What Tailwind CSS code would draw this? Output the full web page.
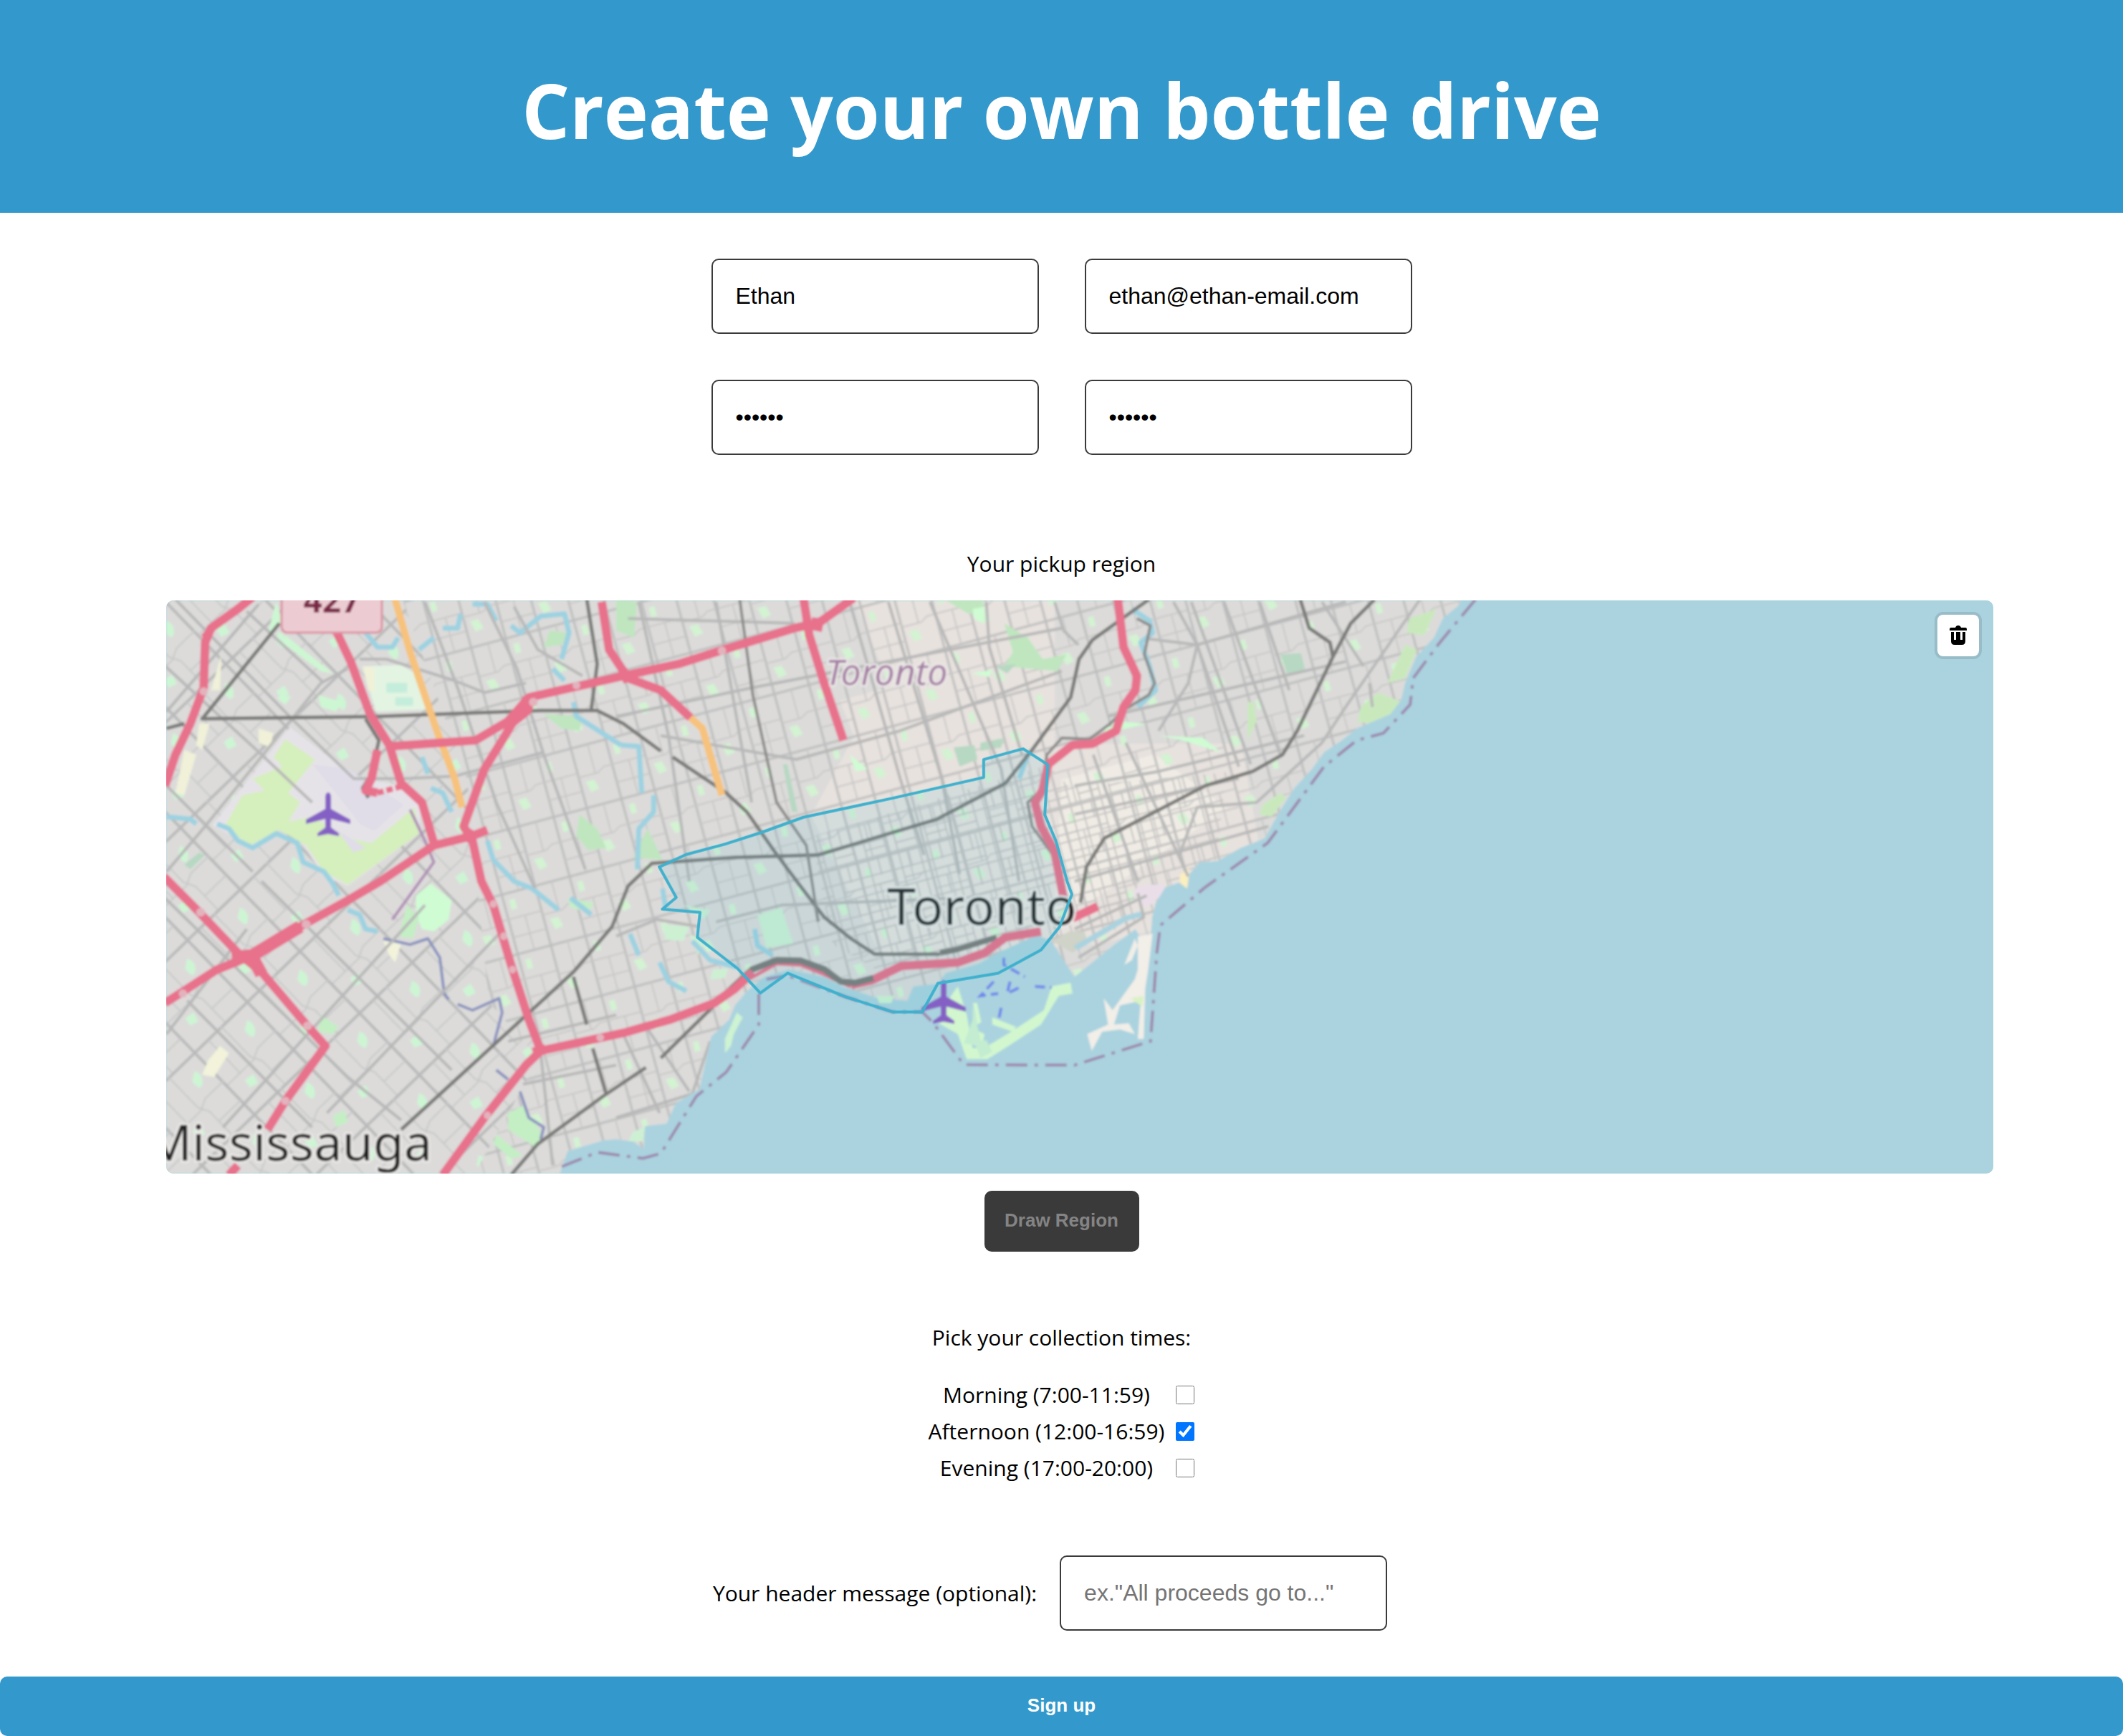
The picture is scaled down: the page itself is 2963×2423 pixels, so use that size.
<!DOCTYPE html>
<html lang="en">
<head>
<meta charset="utf-8">
<title>Create your own bottle drive</title>
<meta name="viewport" content="width=device-width, initial-scale=1">
<script src="https://cdn.jsdelivr.net/npm/@tailwindcss/browser@4"></script>
</head>
<body class="bg-white text-black font-['Open_Sans','Noto_Sans',sans-serif] text-[30px] leading-[44px]">
<header class="bg-[#3399cc] pt-[84px] pb-[73px] px-8 text-center">
  <h1 class="text-white font-bold text-[105px] leading-[140px]">Create your own bottle drive</h1>
</header>

<form class="flex flex-col items-center">
  <div class="mt-16 grid grid-cols-[repeat(2,457px)] gap-16">
    <input type="text" aria-label="Name" value="Ethan" class="h-[105px] rounded-[10px] border-2 border-[#3a3a3a] bg-white px-8 font-['Liberation_Sans',Arial,sans-serif] text-[32px]">
    <input type="email" aria-label="Email" value="ethan@ethan-email.com" class="h-[105px] rounded-[10px] border-2 border-[#3a3a3a] bg-white px-8 font-['Liberation_Sans',Arial,sans-serif] text-[32px]">
    <input type="password" aria-label="Password" value="secret" class="h-[105px] rounded-[10px] border-2 border-[#3a3a3a] bg-white px-8 font-['Liberation_Sans',Arial,sans-serif] text-[32px]">
    <input type="password" aria-label="Confirm password" value="secret" class="h-[105px] rounded-[10px] border-2 border-[#3a3a3a] bg-white px-8 font-['Liberation_Sans',Arial,sans-serif] text-[32px]">
  </div>

  <p class="mt-[130px]">Your pickup region</p>

  <div class="mt-[29px] w-full pl-[232px] pr-[181px]">
    <div class="relative h-[800px] overflow-hidden rounded-[10px] bg-[#aad3df]">
      <svg class="block h-full w-full" viewBox="0 0 2550 800" preserveAspectRatio="xMinYMin slice" role="img" aria-label="Map of Toronto">
        <defs>
          <filter id="soft" x="0" y="0" width="100%" height="100%"><feGaussianBlur stdDeviation="1.4"/></filter>
          <clipPath id="land"><path transform="translate(-12 -18) scale(.41454 .33333)" d="M0,0H4410L4380,75 4327,130 4297,210 4237,290 4200,400 4187,470 4150,530 4037,590 3987,640 3927,690 3887,760 3827,840 3777,940 3727,1050 3647,1090 3567,1145 3507,1150 3473,1200 3466,1260 3440,1235 3393,1254 3360,1320 3348,1380 3344,1465 3312,1470 3292,1430 3216,1500 3167,1550 3087,1630 3050,1560 3010,1480 2960,1455 2844,1520 2764,1575 2654,1615 2624,1660 2544,1670 2524,1730 2424,1720 2304,1670 2244,1630 2124,1600 2044,1630 1984,1690 1944,1750 1924,1810 1864,1880 1844,1990 1824,2100 1744,2160 1714,2245 1640,2255 1637,2350 1600,2320 1544,2310 1500,2315 1380,2360 1350,2470H0Z"/></clipPath>
          <pattern id="west" width="120" height="102" patternUnits="userSpaceOnUse" patternTransform="rotate(46)">
            <path d="M0,2H120M2,0V102" stroke="#bababa" stroke-width="4" fill="none"/>
            <path d="M0,52H60L75,44H120M58,0V36L66,52V102M2,78H66M94,2V44" stroke="#c8c8c8" stroke-width="2" fill="none"/>
            <path d="M20,20q12,-6 20,4t-12,8zM80,66l14,4-4,12-12-2z" fill="#cdf5d3"/>
          </pattern>
          <pattern id="east" width="98" height="86" patternUnits="userSpaceOnUse" patternTransform="rotate(-15)">
            <path d="M0,2H98M2,0V86M52,0V86" stroke="#bdbdbd" stroke-width="3" fill="none"/>
            <path d="M0,44H30L40,38H98M26,2V44M76,38V86M52,64H98" stroke="#c9c8c7" stroke-width="2" fill="none"/>
            <path d="M10,52h12l4,14-12,2zM60,12h8v14h-8z" fill="#d3f3d2"/>
          </pattern>
          <pattern id="core" width="44" height="50" patternUnits="userSpaceOnUse" patternTransform="rotate(-15)">
            <path d="M0,1H44M1,0V50M16,0V50M30,0V28M0,26H44M16,40H44" stroke="#c4c2c1" stroke-width="2" fill="none"/>
          </pattern>
          <g id="plane"><path d="M0,-31C3,-31 4,-27 4,-24V-8L31,7V13L4,6V18L15,26V30L0,27L-15,30V26L-4,18V6L-31,13V7L-4,-8V-24C-4,-27 -3,-31 0,-31Z" fill="#8461c4"/></g>
        </defs>

        <g filter="url(#soft)">
          <rect width="2550" height="800" fill="#aad3df"/>
          <g clip-path="url(#land)">
            <rect width="1900" height="800" fill="#dcdbda"/>
            <path d="M960,0H1240V200L1500,200 1540,420 1300,480 1000,500 900,300 960,190 940,140 1010,120Z" fill="#e7e2de"/>
            <path d="M1250,250L1380,215 1480,290 1290,420 1240,440Z" fill="#f0ece5"/>
            <path d="M0,0H330L420,250 450,560 520,640 430,800H0Z" fill="url(#west)"/>
            <path d="M330,0H1900V800H430L520,640 450,560 420,250Z" fill="url(#east)"/>
            <path d="M900,330L1230,230 1260,260 1480,240 1460,400 1300,470 1000,520 930,480Z" fill="url(#core)"/>

            <!-- fields and parks -->
            <g transform="translate(-12 -18) scale(.41454 .33333)">
              <path d="M445,585L670,800 830,830 885,900 880,1030 640,1250 560,1210 480,1060 400,1010 330,1095 185,995Z" fill="#e6e3e8"/>
              <path d="M430,635L390,710 420,750 320,800 360,850 285,870 225,1000 310,1080 410,1015 500,1080 560,1190 640,1245 880,1030 865,920 720,1070 640,1050 520,960 440,980 480,900 440,860 530,720Z" fill="#d5efbd"/>
              <path d="M520,740L640,760 830,910 730,1020 680,990 600,860Z" fill="#e0dde8"/>
              <path d="M600,1010L700,1090 660,1110z" fill="#e0dde8"/>
              <path d="M690,330L820,325 880,370 920,510 735,520Z" fill="#e3f4e2"/>
              <path d="M770,400h70v40h-70zM800,460h60v35h-60z" fill="#c5eddb"/>
              <path d="M690,330L730,335 730,440 710,430zM215,280L180,430 210,430zM140,570h35l-25,110-20-20zM90,680l40,20-40,170-30-10zM340,590l50,20-10,60-40-20z" fill="#f0f1d8"/>
              <path d="M400,60l20,80-50,60 20-100zM540,450l80,30-20,40-50-20zM430,200l100,100 60,60-40-10-120-110zM400,460l50-5-20,35z" fill="#cdf7d2"/>
              <path d="M1300,530l130,10-10,60-60-10zM1320,180l60,10-20,50-60,10zM1420,950l60,60 30,80-60,10-40-60zM1544,50l70,10-10,150-60-30zM1650,1010l50,130-100-10zM2650,50h130v60h-50zM2850,150l80,60 50,90 80,-20-30,70-180-20 30-60z" fill="#bfe6bf"/>
              <path d="M2820,330l70-10-30,40zM2680,670l70,-10 10,60-60,30zM2770,650l80-20-10,40-70,15zM2105,740l15,0 35,200-20,0zM90,1160l50-50 20,10-50,60zM3780,280l70-5 15,80-60,15z" fill="#b7d8c2"/>
              <path d="M870,1290l50-50 70,70-10,80-50,50-40-10-20-60zM2744,90l40,-10-5,70-30-20zM2740,360l70-15-10,30zM2330,700l60,60-40,10zM3187,590l80-30-70,70zM3370,620l150,10 60,60-130-50zM3220,560l110,10-130,40z" fill="#cffcd3"/>
              <path d="M4050,500l60,-60 80,40-60,90-90-5zM4215,130l90-40-40,110-60-10zM4200,240l40,20-40,120-60,20zM3720,910l60-50 20,20-50,80-40-10zM3670,480l20,0 10,80-30,80z" fill="#c9e9bd"/>
              <path d="M210,1920l30,30-50,100-40-10 20-60zM760,1480l60,10-20,80-20-30z" fill="#f2f3da"/>
              <path d="M550,1790l60,50-20,30-50,-10zM1180,2200l50-30 60,110-10,70-100-80zM1140,2290l90,90-40,10-60-60zM590,2210l40-20 10,50-40,20zM840,1330l40,50-20,90-50-10zM1380,1300l90,20-20,40-60-20z" fill="#c4eec4"/>
              <path d="M2020,1370l80-30 40,150-90,20zM1700,1410l90,10-20,60-60,-5zM1790,1450l50,30-20,60zM1870,1600l50,-5-10,40-50,5zM1600,2280l40-20-5,60-50,0zM1770,1330l90,20-20,40z" fill="#cdf0d3"/>
              <path d="M3440,1205l32,-30 0,100-25,-5z" fill="#fbeebf"/>
              <path d="M3300,1250l90,-10 0,40-60,60-50-50z" fill="#eadfe8"/>
              <path d="M3010,1480l60-40 50,0 10,40-50,50z" fill="#cfd3c8"/>
              <path d="M3090,1510L3260,1385 3320,1365" stroke="#aad3df" stroke-width="22" fill="none"/>
            </g>

            <!-- creeks and arterial roads -->
            <g transform="translate(-12 -18) scale(.41454 .33333)" fill="none" stroke-linejoin="round">
              <g stroke="#9dd2e1" stroke-width="7">
                <path vector-effect="non-scaling-stroke" d="M30,960L110,970 130,990M200,990L240,1010 270,1060 320,1090 400,1030 470,1070 490,1150 560,1190 590,1240 610,1290M640,1350L680,1370 700,1430 740,1440"/>
                <path vector-effect="non-scaling-stroke" d="M700,190L740,250 790,250 810,210M880,260L930,210M960,170L1010,170 1020,110M1060,70L1110,70 1140,140M1190,160L1220,190 1290,120 1370,110 1385,190 1360,300M1330,340L1370,390M890,710L910,780M920,840L960,860 990,940M1110,1060L1130,1140 1200,1230 1260,1260 1350,1350M1390,1300L1460,1370M1400,480L1410,540 1560,660"/>
                <path vector-effect="non-scaling-stroke" d="M1560,660L1620,665 1630,860M1670,870L1670,940 1620,1010 1615,1180M1590,1450L1620,1540M1690,1570L1720,1650 1780,1690M2010,1430L2020,1500 2070,1540M1700,1260L1710,1340M1800,1480L1860,1560 1950,1590"/>
                <path vector-effect="non-scaling-stroke" d="M3280,90L3340,140 3350,190 3310,230 3340,330 3360,430 3300,500M2930,700L2900,800"/>
              </g>
              <path vector-effect="non-scaling-stroke" stroke="#8b93bd" stroke-width="4" d="M760,1470L850,1495 910,1470 950,1550 965,1700 980,1725M1010,1745L1060,1770 1150,1720 1160,1780 1130,1920M1140,2020L1180,2060M1220,2110L1250,2220 1300,2260 1290,2310"/>
              <path vector-effect="non-scaling-stroke" stroke="#b08fb5" stroke-width="4" d="M850,930L900,1060 930,1150 790,1390"/>
              <g stroke="#b8b8b8" stroke-width="4">
                <path vector-effect="non-scaling-stroke" d="M60,50L460,560 660,800 830,800 1000,790 1300,690M0,300L350,700 520,900M300,100L560,400 M30,830L320,1190M340,70L30,520M640,340L550,400 160,1000 30,1190M680,300L770,300 1000,390 1100,440 1240,400M900,60L1010,420 1140,900 1270,1260M1100,60L1210,340 1300,700 1440,1180M1200,80L1280,260 1430,370"/>
                <path vector-effect="non-scaling-stroke" d="M350,1230L990,2020M0,1270L640,2050 820,2230M30,1870L300,1430M220,2260L900,1330M100,1730L520,2260M570,2200L1150,1450M1544,1460L1680,1390 1820,1420M1544,540L2000,420 3044,170M1584,130L2144,150M1694,620L2150,720 2500,600 3044,350M1880,1400L2100,1330 2700,1300"/>
                <path vector-effect="non-scaling-stroke" d="M1620,60L1720,620 1790,1230M1880,60L2000,900M2330,60L2500,800 2580,1120M2460,60L2640,800 2700,1200M2600,60L2840,760 2900,1230M2790,60L2800,250 2910,700M3020,60L3050,180 3100,240"/>
                <path vector-effect="non-scaling-stroke" d="M3337,215L3500,240 4000,60M3200,540L4000,310M3420,60L3500,240 3640,750M3480,60L3680,740M3590,60L3780,700M3710,60L3810,430M3920,60L4060,330M4250,50L4000,500 3920,650 3700,900 3500,920 3440,1120M3500,240L3470,400 3370,600M3087,830L3370,770 3860,620M3087,950L3640,800M3150,700L3300,1230M3260,650L3470,1210M3087,1230L3740,1000M4080,400L4090,500"/>
                <path vector-effect="non-scaling-stroke" d="M1180,1900L1544,1790M1230,2080L1544,2000M1330,2420L1290,1950M1560,1850L1690,2200M1640,1830L1790,2110M1544,2220L1800,2120 1860,1900M3087,1430L3330,1290M3100,1550L3320,1380 3300,1280"/>
              </g>
            </g>
          </g>

          <!-- islands and spit -->
          <g transform="translate(-12 -18) scale(.41454 .33333)">
            <path d="M2694,1670L2724,1790 2744,1930 2794,1920 2874,1860 2984,1770 3010,1670 3074,1655 3080,1700 3034,1710 2974,1830 2864,1920 2794,1975 2724,1975 2694,1870 2624,1820 2660,1730Z" fill="#d2f7cf"/>
            <path d="M2750,1850l34,20-10,60-34-20zM2810,1800l80,40-10,20-70-30zM2745,1740l14,0 14,80-14,10z" fill="#d2f7cf"/>
            <path d="M2744,1750L2774,1915 2714,1910 2744,1810M2750,1900l40-5 20,50-40,25z" fill="#c3ecd0"/>
            <path d="M3300,1460L3350,1450 3335,1600 3325,1680 3320,1890 3300,1890 3310,1730 3240,1750 3220,1830 3270,1825 3290,1870 3240,1850 3180,1860 3145,1940 3130,1870 3200,1830 3185,1720 3215,1770 3290,1640 3300,1600Z" fill="#f2eee8"/>
            <path d="M3290,1470L3255,1580 3280,1560 3300,1500z" fill="#f2eee8"/>
            <path d="M3275,1720l45,-10-5,45z" fill="#d9f2c3"/>
            <path d="M1950,1780l20,20-30,70-10,50-20,30 0-60zM2420,1710l60,0-10,30-40,0z" fill="#cdf3d2"/>
            <g fill="none" stroke="#6f86ea" stroke-width="4" stroke-dasharray="14 7">
              <path vector-effect="non-scaling-stroke" d="M2849,1550L2849,1580 2920,1630M2815,1650L2770,1710 2830,1700M2870,1650L2860,1700 2910,1670M2954,1670L3010,1675M2840,1760L2830,1820"/>
            </g>
            <g fill="none" stroke="#9c87ad" stroke-width="4" stroke-dasharray="30 10 5 10">
              <path vector-effect="non-scaling-stroke" d="M4437,50L4317,230 4227,380 4217,490 4127,610 4037,640 3927,750 3737,1070 3527,1255 3376,1415 3364,1530 3343,1900 3087,2000 2714,1998 2609,1820 2574,1777 2474,1777 2314,1713 2121,1625 2050,1640"/>
              <path vector-effect="non-scaling-stroke" d="M2024,1700V1830L1914,2030 1814,2130 1694,2370 1634,2390 1480,2365 1350,2430"/>
            </g>
          </g>

          <!-- railways, then motorways -->
          <g transform="translate(-12 -18) scale(.41454 .33333)" fill="none" stroke-linejoin="round">
            <g stroke="#7b7b79" stroke-width="5">
              <path vector-effect="non-scaling-stroke" d="M30,590L90,570M410,150L150,550 740,540 1290,515 1480,515 1568,570 1694,685M1734,710L1914,860 1984,940 2074,1100 2164,1250 2244,1380 2334,1470 2414,1535 2634,1535M700,550L745,640 720,780 690,840 710,880M1445,50L1480,320 1460,510"/>
              <path vector-effect="non-scaling-stroke" d="M3337,50L3147,220 3102,300 3074,460 2944,680 2854,820 2624,970 2224,1120 1944,1130 1664,1155 1584,1250 1530,1420 1400,1610 820,2270"/>
              <path vector-effect="non-scaling-stroke" d="M4097,50L4017,150 3957,290 3837,600 3787,700 3687,770 3527,830 3187,1050 3127,1170 3107,1320M3847,50L3877,170 3947,230 3957,290M1874,1750L1694,1970M1644,2010L1500,2130 1280,2330 1190,2460M1400,1630L1445,1830M1465,1930L1510,2120"/>
            </g>
            <path vector-effect="non-scaling-stroke" stroke="#7b7b79" stroke-width="8" d="M2634,1530L2694,1515 2824,1465M1874,1745L2004,1595"/>
            <path vector-effect="non-scaling-stroke" stroke="#8c8c8a" stroke-width="4" d="M1959,43L2004,450 2084,900 2184,1080 2224,1400M3297,130L3342,160 3322,280 3357,400 3337,450 3257,510 3207,570 3137,635 3044,630 2994,700 2974,850 2929,900 2944,1000 3014,1120"/>
            <g stroke="#f7c27b" stroke-width="10">
              <path vector-effect="non-scaling-stroke" d="M795,30L850,270 940,600 1000,800 1025,920M1794,545L1834,590 1900,870"/>
            </g>
            <g stroke="#e8718b" stroke-width="12">
              <path vector-effect="non-scaling-stroke" d="M320,40L270,90 180,170 160,230 155,420 110,570 60,700 25,830M600,180L650,310 715,530 780,660 820,820 890,900 930,1070M780,665L1070,640 1180,560 1250,460 1568,370 1754,320 1894,265 2144,170 2224,150 2344,43"/>
              <path vector-effect="non-scaling-stroke" d="M1495,60L1520,260 1584,380 1694,430 1794,545M2174,40L2194,200 2244,400 2309,640M1240,470L1170,620 1100,760 1030,1000 1060,1060 1090,1230 1130,1330 1190,1580 1250,1810 1290,1940 1240,2000 1100,2220 960,2460"/>
              <path vector-effect="non-scaling-stroke" d="M1110,1015L1060,1040 930,1080 750,1230 640,1310 480,1420 320,1540 200,1600 25,1740M20,1210L140,1360 270,1530 350,1610 500,1830 565,1920 430,2150 370,2270M270,2420L240,2460M740,680L720,800 700,850 740,860"/>
              <path vector-effect="non-scaling-stroke" d="M1290,1940L1568,1865 1724,1810 1874,1740 1944,1680 2004,1610M2334,1665L2404,1645 2504,1585 2694,1570 2784,1530 2854,1465 2974,1440M3080,1385L3165,1335M3232,40L3252,250 3297,370 3292,430 3252,500 3227,600 3147,655 3080,660 2999,740 2979,850 2954,900 2974,1000 3019,1100 3050,1300"/>
            </g>
            <path vector-effect="non-scaling-stroke" stroke="#e8718b" stroke-width="8" stroke-dasharray="9 4" d="M740,860L830,830"/>
            <path vector-effect="non-scaling-stroke" stroke="#e8718b" stroke-width="18" d="M1250,460L1240,510 1180,570M480,1420L320,1540 250,1550M1590,360L1560,380M320,1550L350,1620M1040,1030L1060,1050M2200,150L2240,160M160,180L180,200M1280,1920L1290,1960"/>
            <path vector-effect="non-scaling-stroke" stroke="#e8718b" stroke-width="5" d="M1990,1640L2084,1575 2164,1580 2244,1620 2334,1672"/>
            <path vector-effect="non-scaling-stroke" stroke="#7b7b79" stroke-width="9" d="M2000,1600L2084,1560 2164,1562 2244,1598 2300,1650 2350,1655 2410,1635"/>
            <g fill="#e3b3bd">
              <ellipse cx="155" cy="435" rx="14" ry="17"/><ellipse cx="1900" cy="265" rx="14" ry="18"/><ellipse cx="1265" cy="480" rx="15" ry="18"/><ellipse cx="145" cy="1360" rx="15" ry="18"/><ellipse cx="500" cy="1410" rx="15" ry="18"/><ellipse cx="505" cy="1835" rx="15" ry="18"/><ellipse cx="430" cy="2150" rx="14" ry="17"/><ellipse cx="85" cy="1700" rx="14" ry="17"/><ellipse cx="1130" cy="1325" rx="12" ry="16"/><ellipse cx="1165" cy="1460" rx="12" ry="16"/><ellipse cx="1195" cy="1600" rx="12" ry="16"/><ellipse cx="1110" cy="2210" rx="12" ry="16"/><ellipse cx="1490" cy="1885" rx="13" ry="16"/><ellipse cx="1410" cy="410" rx="13" ry="16"/>
            </g>
          </g>

          <rect x="161" y="-30" width="140" height="75" rx="8" fill="#ecccd2" stroke="#dc92a1" stroke-width="3"/>
          <use href="#plane" x="226" y="299"/>
          <use href="#plane" x="1085" y="561"/>
          <g font-family="'Noto Sans', sans-serif" paint-order="stroke" stroke-linejoin="round">
            <text x="231" y="17" text-anchor="middle" font-size="46" font-weight="700" fill="#7a2747">427</text>
            <text x="920" y="118" font-size="50" font-style="italic" fill="#a47fa3" stroke="#ece9e8" stroke-width="5">Toronto</text>
            <text x="1006" y="453" font-size="72" fill="#222" stroke="#ebe9e7" stroke-width="6">Toronto</text>
            <text x="371" y="782" text-anchor="end" font-size="70" fill="#222" stroke="#ebe9e7" stroke-width="6">Mississauga</text>
          </g>
        </g>

        <!-- selected pickup region -->
        <g transform="translate(-12 -18) scale(.41454 .33333)">
          <path vector-effect="non-scaling-stroke" fill="#3bb2d0" fill-opacity=".1" stroke="#3fb0cd" stroke-width="4" stroke-linejoin="round" d="M1689,1170L1779,1118 1909,1075 2034,1025 2174,962 2474,882 2781,795 2781,720 2914,675 2997,742 2987,952 3024,1060 3062,1230 3078,1285 3037,1420 2974,1518 2829,1615 2627,1657 2574,1777 2474,1777 2314,1713 2121,1615 2029,1698 1952,1595 1817,1465 1826,1360 1699,1347 1746,1298Z"/>
        </g>
      </svg>
      <button type="button" aria-label="Delete region" class="absolute top-4 right-4 flex size-[66px] items-center justify-center rounded-xl border-4 border-black/10 bg-white bg-clip-padding">
        <svg class="h-[28px] w-6" viewBox="0 0 24 28" fill="#000" aria-hidden="true"><path d="M0,7V5Q0,3 2,3H8Q9,0 12,0T16,3H22Q24,3 24,5V7ZM2,9H6V20H9V9H15V20H18V9H22V22Q22,27 17,27H7Q2,27 2,22Z"/></svg>
      </button>
    </div>
  </div>

  <button type="button" disabled class="mt-6 h-[85px] w-[216px] rounded-[10px] bg-[#3a3a3a] pb-1 font-['Liberation_Sans',Arial,sans-serif] text-[26px] font-bold text-[#848484]">Draw Region</button>

  <fieldset class="mt-[98px] flex flex-col items-center">
    <legend class="mx-auto">Pick your collection times:</legend>
    <div class="mt-9 grid grid-cols-[auto_26px] items-center gap-x-4 gap-y-[7px] text-center">
      <label for="morning">Morning (7:00-11:59)</label><input id="morning" type="checkbox" class="size-[26px]">
      <label for="afternoon">Afternoon (12:00-16:59)</label><input id="afternoon" type="checkbox" checked class="size-[26px]">
      <label for="evening">Evening (17:00-20:00)</label><input id="evening" type="checkbox" class="size-[26px]">
    </div>
  </fieldset>

  <div class="mt-[100px] flex items-center gap-8 pr-8">
    <label for="message">Your header message (optional):</label>
    <input id="message" type="text" placeholder='ex."All proceeds go to..."' class="h-[105px] w-[457px] rounded-[10px] border-2 border-[#3a3a3a] bg-white px-8 font-['Liberation_Sans',Arial,sans-serif] text-[32px] placeholder:text-[#757575]">
  </div>

  <button type="submit" class="mt-16 h-[83px] w-full rounded-[10px] bg-[#3399cc] pb-1 font-['Liberation_Sans',Arial,sans-serif] text-[26px] font-bold text-white">Sign up</button>
</form>
</body>
</html>
